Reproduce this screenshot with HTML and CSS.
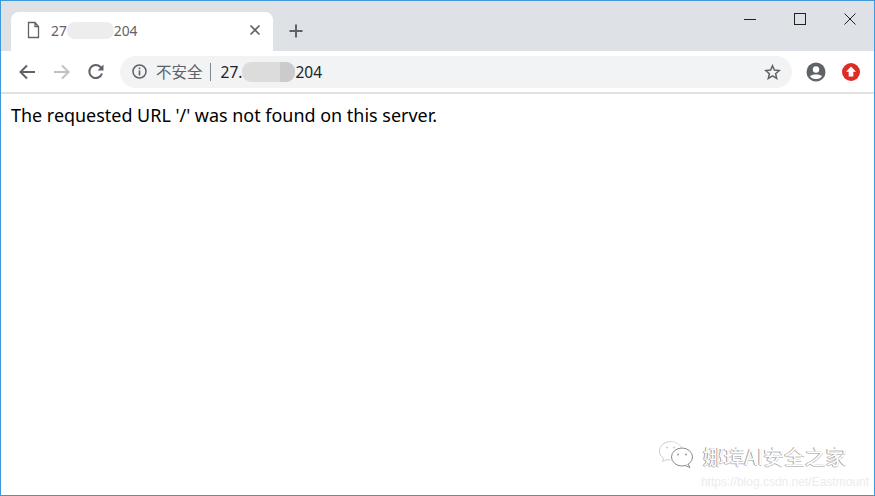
FILE: index.html
```html
<!DOCTYPE html>
<html lang="en">
<head>
<meta charset="utf-8">
<title>27.204</title>
<link rel="stylesheet" href="styles.css">
</head>
<body>
<div class="window">
  <div class="tabstrip">
    <div class="tab">
      <svg class="tab-file" width="14" height="18" viewBox="0 0 14 18"><path d="M1.500 1.500H8L11.500 5.500V16.500H1.500z M8 1.500V5.500H11.500" fill="none" stroke="#5f6368" stroke-width="1.300"/></svg>
      <span class="tab-title">27<span class="tab-blur"></span>204</span>
      <svg class="tab-close" width="12" height="12" viewBox="0 0 12 12"><path d="M1.500 1.500L10.500 10.500M10.500 1.500L1.500 10.500" stroke="#5f6368" stroke-width="1.700"/></svg>
    </div>
    <svg class="newtab" width="14" height="14" viewBox="0 0 14 14"><path d="M7 0.500V13.500M0.500 7H13.500" stroke="#5f6368" stroke-width="2"/></svg>
    <div class="winctl">
      <svg width="12" height="12" viewBox="0 0 12 12"><path d="M0 6.500H12" stroke="#222" stroke-width="1"/></svg>
      <svg width="12" height="12" viewBox="0 0 12 12"><rect x="0.500" y="0.500" width="11" height="11" fill="none" stroke="#222"/></svg>
      <svg width="12" height="12" viewBox="0 0 12 12"><path d="M0.500 0.500L11.500 11.500M11.500 0.500L0.500 11.500" stroke="#222" stroke-width="1"/></svg>
    </div>
  </div>
  <div class="toolbar">
    <svg class="nav nav-back" width="18" height="16" viewBox="0 0 18 16"><path d="M17 8H2.500M9 1.500L2.500 8L9 14.500" fill="none" stroke="#5f6368" stroke-width="2"/></svg>
    <svg class="nav nav-forward" width="18" height="16" viewBox="0 0 18 16"><path d="M1 8H15.500M9 1.500L15.500 8L9 14.500" fill="none" stroke="#bdc1c6" stroke-width="2"/></svg>
    <svg class="nav" width="18" height="18" viewBox="0 0 18 18"><path d="M15 10.500A6.500 6.500 0 1 1 13.500 4L15.500 6" fill="none" stroke="#5f6368" stroke-width="2"/><path d="M16.500 1.500V7.500H10.500z" fill="#5f6368"/></svg>
    <div class="omnibox">
      <svg class="info" width="15" height="15" viewBox="0 0 15 15"><circle cx="7.500" cy="7.500" r="6.500" fill="none" stroke="#5f6368" stroke-width="1.500"/><path d="M7.500 6.500V11.500M7.500 3.500V5.200" stroke="#5f6368" stroke-width="1.600"/></svg>
      <span class="insecure">不安全</span>
      <span class="sep"></span>
      <span class="url">27.<span class="url-blur"><span class="url-patch"></span></span>204</span>
      <svg class="star" width="17" height="16" viewBox="0 0 17 16"><path d="M8.500 1.700L10.400 6.100L15.200 6.500L11.600 9.700L12.700 14.400L8.500 11.900L4.300 14.400L5.400 9.700L1.800 6.500L6.600 6.100z" fill="none" stroke="#5f6368" stroke-width="1.500"/></svg>
    </div>
    <svg class="avatar" width="20" height="20" viewBox="0 0 20 20"><circle cx="10" cy="10" r="9.500" fill="#5f6368"/><circle cx="10" cy="7.500" r="3.200" fill="#fff"/><path d="M4 14.200C5.500 11.800 14.500 11.800 16 14.200C14.500 16.500 12 17 10 17S5.500 16.500 4 14.200z" fill="#fff"/></svg>
    <svg class="update" width="18" height="18" viewBox="0 0 18 18"><circle cx="9" cy="9" r="9" fill="#dd2c25"/><path d="M9 3.500L14 8.800H11.300V13.500H6.700V8.800H4z" fill="#fff"/></svg>
  </div>
  <main class="content">
    <p class="message">The requested URL '/' was not found on this server.</p>
  </main>
  <div class="watermark">
    <svg class="wechat" width="36" height="28" viewBox="0 0 36 28"><path d="M13 1.500C6 1.500 1.500 6 1.500 11C1.500 14 3 16.500 5.500 18L4.500 21.500L9 19.500C10 19.800 11 20 12.500 20" fill="none" stroke="#cfcfcf" stroke-width="1"/><path d="M13 1.500C18 1.500 22.500 4.500 24 9" fill="none" stroke="#dcdcdc" stroke-width="1"/><ellipse cx="24" cy="17" rx="10.500" ry="9" fill="#fff" stroke="#8a8a8a" stroke-width="1"/><path d="M30 24L32 27.500L27 25.500" fill="#fff" stroke="#8a8a8a" stroke-width="1"/><circle cx="20" cy="14.500" r="1" fill="#999"/><circle cx="28" cy="14.500" r="1" fill="#999"/><circle cx="9" cy="7.500" r="1" fill="#ccc"/><circle cx="16" cy="7.500" r="1" fill="#ccc"/></svg>
    <span class="wm-name">娜璋AI安全之家</span>
    <span class="wm-link">https://blog.csdn.net/Eastmount</span>
  </div>
</div>
</body>
</html>
```
FILE: styles.css
```css
* { box-sizing: border-box; }
html, body { margin: 0; height: 100%; }
body { background: #fff; overflow: hidden; }
.window {
  position: relative;
  width: 875px;
  height: 496px;
  border: 1px solid #3f97dc;
  display: flex;
  flex-direction: column;
  overflow: hidden;
  font-family: "Noto Sans", "Noto Sans CJK SC", sans-serif;
}
.tabstrip {
  height: 50px;
  background: #dee1e6;
  display: flex;
  align-items: flex-end;
  padding-left: 10px;
  flex: none;
}
.tab {
  width: 262px;
  height: 39px;
  background: #fff;
  border-radius: 8px 8px 0 0;
  display: flex;
  align-items: center;
  padding: 0 12px 0 16px;
}
.tab-file { flex: none; margin-bottom: 3px; }
.tab-title {
  margin-left: 10px;
  flex: 1;
  font-size: 13.800px;
  color: #5f6368;
  display: flex;
  align-items: center;
  margin-bottom: 2px;
}
.tab-blur {
  width: 47px;
  height: 17px;
  background: #ededed;
  border-radius: 8px;
}
.tab-close { flex: none; margin-bottom: 3px; }
.newtab { margin: 0 0 13px 16px; flex: none; }
.winctl {
  margin-left: auto;
  align-self: flex-start;
  display: flex;
  align-items: center;
  gap: 38px;
  padding: 12px 18px 0 0;
}
.toolbar {
  height: 41px;
  background: #fff;
  display: flex;
  align-items: center;
  padding-left: 16px;
  flex: none;
}
.nav { flex: none; margin-right: 17px; }
.nav-back { margin-left: 1px; }
.nav-forward { margin-right: 16px; }
.omnibox {
  width: 672px;
  height: 32px;
  margin-left: -2px;
  background: #f1f3f4;
  border-radius: 16px;
  display: flex;
  align-items: center;
  padding: 0 11px 0 12px;
}
.info { flex: none; }
.insecure { margin-left: 9px; font-size: 15.500px; color: #5f6368; }
.sep { width: 1px; height: 18px; background: #80868b; margin: 0 9px 0 7px; }
.url { margin-left: 1px; font-size: 15.500px; color: #202124; display: flex; align-items: center; }
.url-blur {
  display: flex;
  justify-content: flex-end;
  width: 53px;
  height: 20px;
  background: #dcdcdc;
  border-radius: 9px;
  overflow: hidden;
}
.url-patch { width: 15px; background: #cbcbcb; }
.star { margin-left: auto; flex: none; }
.avatar { margin-left: 14px; flex: none; }
.update { margin-left: 16px; flex: none; }
.content {
  flex: 1;
  border-top: 2px solid #e1e1e1;
  padding: 9px 10px;
}
.message {
  margin: 0;
  font-size: 17.950px;
  line-height: 24px;
  color: #000;
}
.watermark {
  position: absolute;
  right: 0;
  bottom: 0;
  width: 220px;
  height: 60px;
}
.wechat { position: absolute; left: 4px; top: 5px; }
.wm-name {
  position: absolute;
  left: 49px;
  top: 8px;
  font-family: "Noto Sans CJK SC", sans-serif;
  font-size: 20.800px;
  line-height: 26px;
  white-space: nowrap;
  color: #fff;
  text-shadow: -1px 0 #9a9a9a, 0 1px #c4c4c4;
}
.wm-link {
  position: absolute;
  right: 5px;
  bottom: 6px;
  font: 12px "Liberation Sans", sans-serif;
  color: #ececec;
  white-space: nowrap;
}
```
